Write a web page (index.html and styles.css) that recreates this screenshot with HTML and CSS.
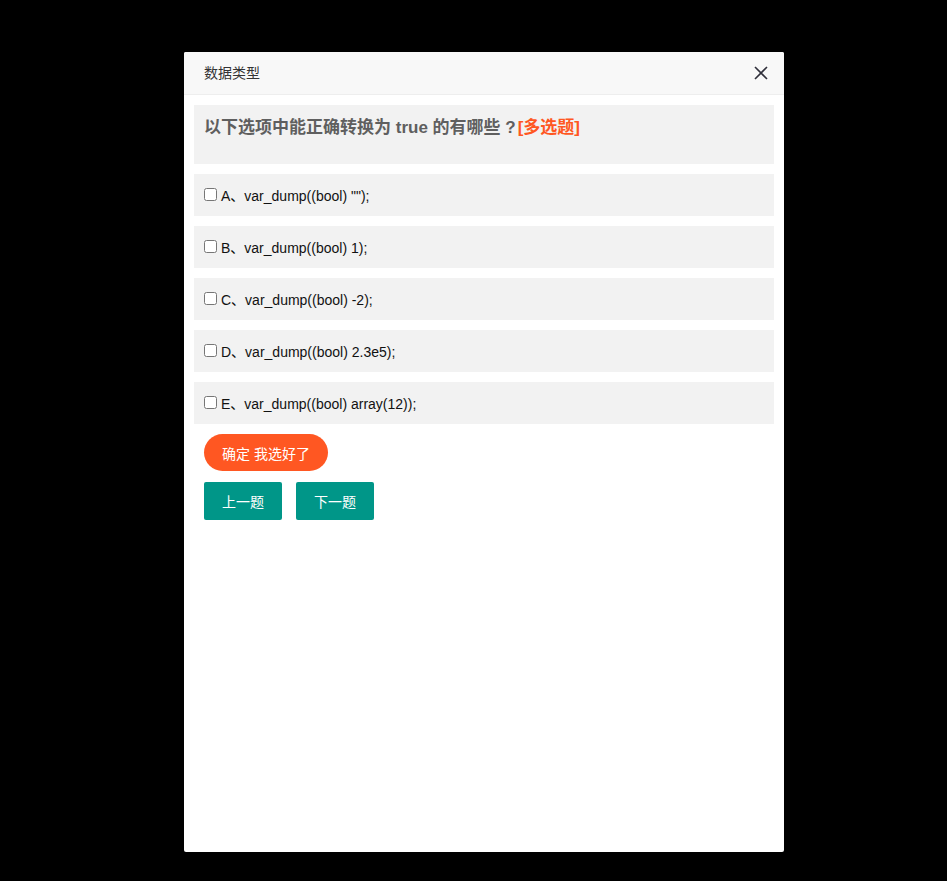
FILE: index.html
```html
<!DOCTYPE html>
<html lang="zh">
<head>
<meta charset="utf-8">
<title>数据类型</title>
<link rel="stylesheet" href="styles.css">
</head>
<body>
<div class="overlay">
  <div class="dialog">
    <div class="dialog-title">
      <span>数据类型</span>
      <svg class="close" width="14" height="14" viewBox="0 0 14 14"><path d="M1 1L13 13M13 1L1 13" stroke="#2f2f3a" stroke-width="1.6" fill="none"/></svg>
    </div>
    <div class="dialog-body">
      <div class="question">以下选项中能正确转换为 true 的有哪些 ?<span class="tag">[多选题]</span></div>
      <label class="option"><input type="checkbox"> A、var_dump((bool) "");</label>
      <label class="option"><input type="checkbox"> B、var_dump((bool) 1);</label>
      <label class="option"><input type="checkbox"> C、var_dump((bool) -2);</label>
      <label class="option"><input type="checkbox"> D、var_dump((bool) 2.3e5);</label>
      <label class="option"><input type="checkbox"> E、var_dump((bool) array(12));</label>
      <div class="actions">
        <button class="btn btn-orange">确定 我选好了</button>
      </div>
      <div class="actions nav">
        <button class="btn btn-green">上一题</button>
        <button class="btn btn-green">下一题</button>
      </div>
    </div>
  </div>
</div>
</body>
</html>
```
FILE: styles.css
```css
html, body {
  margin: 0;
  padding: 0;
  background: #000;
  font-family: "Liberation Sans", Arial, "Noto Sans CJK SC", sans-serif;
}
.overlay {
  width: 947px;
  height: 881px;
  display: flex;
  justify-content: flex-start;
  padding: 52px 0 0 184px;
  box-sizing: border-box;
}
.dialog {
  width: 600px;
  height: 800px;
  background: #fff;
  border-radius: 2px;
  display: flex;
  flex-direction: column;
}
.dialog-title {
  height: 42px;
  line-height: 42px;
  background: #f8f8f8;
  border-bottom: 1px solid #eee;
  padding: 0 16px 0 20px;
  font-size: 14px;
  color: #333;
  display: flex;
  justify-content: space-between;
  align-items: center;
  border-radius: 2px 2px 0 0;
}
.close {
  display: block;
}
.dialog-body {
  padding: 10px;
  display: flex;
  flex-direction: column;
  gap: 10px;
}
.question {
  background: #f2f2f2;
  padding: 10px 10px 24px 10px;
  font-size: 17px;
  line-height: 25px;
  font-weight: bold;
  color: #5f5f5f;
}
.tag {
  color: #ff5722;
  margin-left: 2px;
}
.option {
  background: #f2f2f2;
  height: 42px;
  display: flex;
  align-items: center;
  padding: 0 10px;
  font-size: 14px;
  color: #111;
  box-sizing: border-box;
}
.option input {
  margin: 0 4px 2px 0;
  width: 13px;
  height: 13px;
}
.actions {
  display: flex;
  gap: 14px;
  padding-left: 10px;
}
.nav {
  margin-top: 1px;
}
.btn {
  height: 38px;
  border: none;
  padding: 0 18px;
  font-size: 14px;
  color: #fff;
  font-family: "Liberation Sans", "Noto Sans CJK SC", sans-serif;
  cursor: pointer;
}
.btn-orange {
  background: #ff5722;
  border-radius: 100px;
  height: 37px;
}
.btn-green {
  background: #009688;
  border-radius: 2px;
  width: 78px;
  padding: 0;
}
```
